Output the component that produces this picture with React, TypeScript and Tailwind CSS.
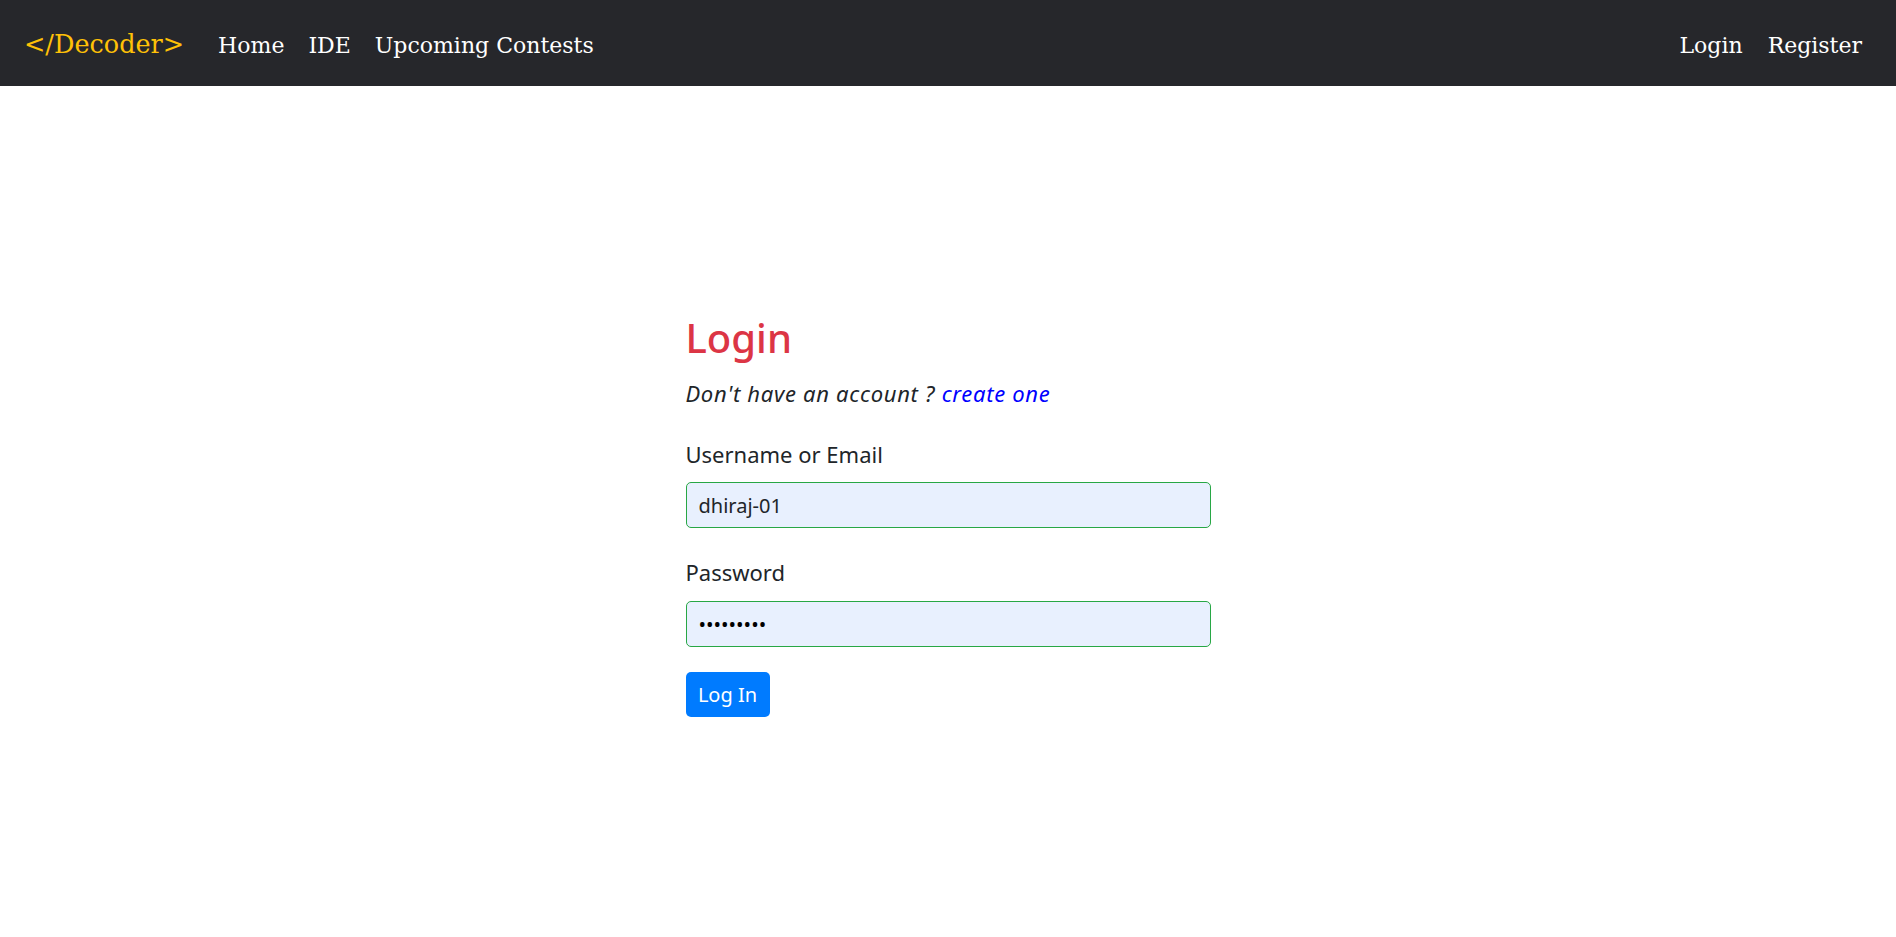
import React from 'react';

const navFont = { fontFamily: '"DejaVu Serif", "Liberation Serif", serif' };

const App: React.FC = () => {
    return (
        <div className="min-h-screen bg-white text-[#212529]" style={{ fontFamily: '"Noto Sans", "Open Sans", sans-serif' }}>
            <nav className="h-[86px] bg-[#26272b] flex items-center justify-between pl-[24px] pr-[34px] pt-[4px]" style={navFont}>
                <div className="flex items-center">
                    <a href="#" className="text-[#ffc107] text-[25.5px] leading-none mr-[34px]">&lt;/Decoder&gt;</a>
                    <div className="flex items-center gap-[24px] text-white text-[22px]">
                        <a href="#">Home</a>
                        <a href="#">IDE</a>
                        <a href="#">Upcoming Contests</a>
                    </div>
                </div>
                <div className="flex items-center gap-[25px] text-white text-[22px]">
                    <a href="#">Login</a>
                    <a href="#">Register</a>
                </div>
            </nav>

            <main className="w-[525px] mx-auto pt-[228px]">
                <h2 className="text-[40px] leading-[48px] font-medium text-[#dc3545]">Login</h2>
                <p className="mt-[16px] text-[22px] leading-[30px] italic tracking-[0.7px]">
                    Don't have an account ? <a href="#" className="text-[#0000ff]">create one</a>
                </p>

                <form className="mt-[31px]" onSubmit={(e) => e.preventDefault()}>
                    <label className="block text-[22px] leading-[30px]">Username or Email</label>
                    <input
                        type="text"
                        defaultValue="dhiraj-01"
                        className="mt-[13px] block w-full h-[46px] px-[12px] text-[20px] bg-[#e8f0fe] border border-[#28a745] rounded-[5px] outline-none"
                    />

                    <label className="block mt-[29px] text-[22px] leading-[30px]">Password</label>
                    <input
                        type="password"
                        defaultValue="dhiraj123"
                        className="mt-[14px] block w-full h-[46px] px-[12px] text-[20px] bg-[#e8f0fe] border border-[#28a745] rounded-[5px] outline-none text-black"
                    />

                    <button
                        type="submit"
                        className="mt-[25px] h-[45px] w-[84px] bg-[#007bff] text-white text-[20px] rounded-[5px]"
                    >
                        Log In
                    </button>
                </form>
            </main>
        </div>
    );
};

export default App;
